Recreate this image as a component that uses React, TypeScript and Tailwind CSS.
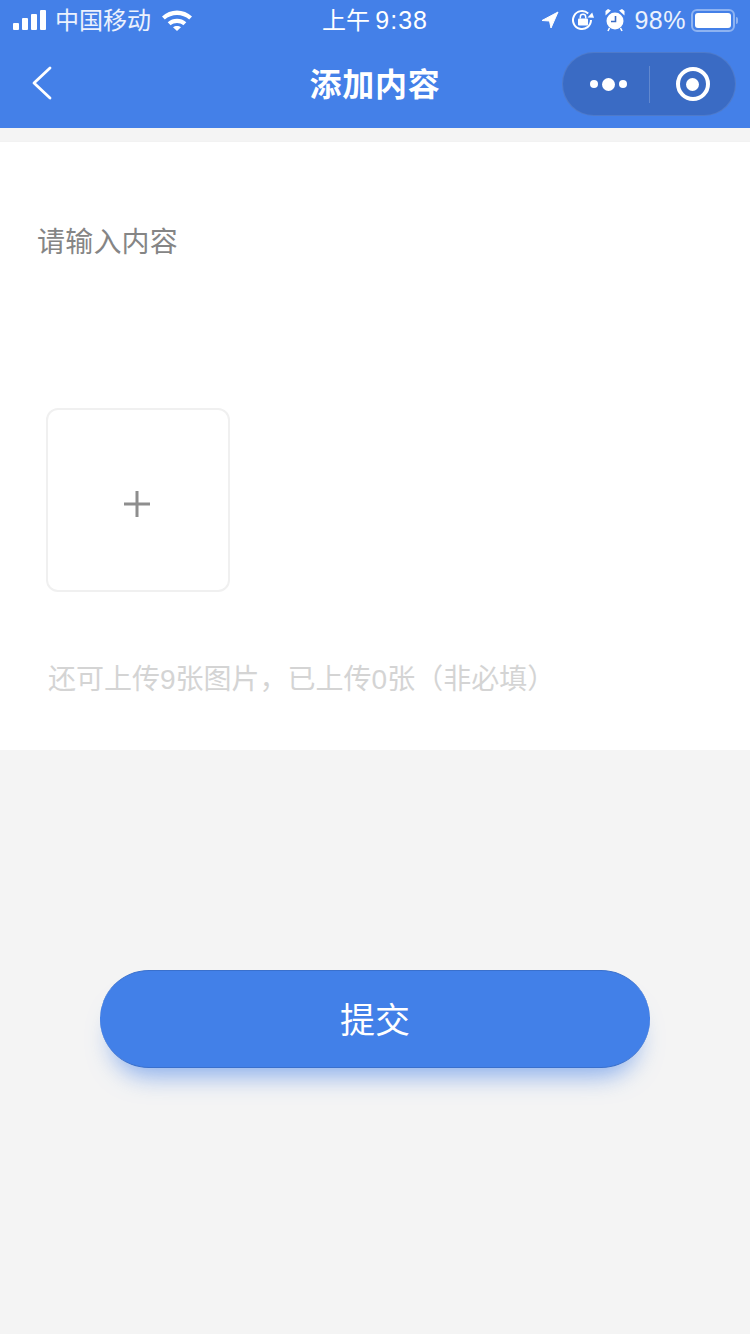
const FONT = "font-['Noto_Sans_CJK_SC','Liberation_Sans',sans-serif]";
const ROMAN = "font-['Liberation_Sans','Noto_Sans_CJK_SC',sans-serif]";

function StatusBar() {
  return (
    <div className="h-10 flex items-center justify-between pl-[13px] pr-[12px] text-white">
      <div className="flex items-center">
        <div className="flex items-end gap-[3px] h-[20px]">
          <span className="w-[6px] h-[7px] rounded-[1px] bg-white" />
          <span className="w-[6px] h-[12px] rounded-[1px] bg-white" />
          <span className="w-[6px] h-[16px] rounded-[1px] bg-white" />
          <span className="w-[6px] h-[20px] rounded-[1px] bg-white" />
        </div>
        <span className={`ml-[9px] text-[24px] leading-[30px] text-white/90 -mt-[2px] ${FONT}`}>中国移动</span>
        <svg className="ml-[11px]" width="30" height="22" viewBox="0 0 30 22" fill="#fff">
          <path d="M0 7.500C8-.5 22-.5 30 7.500l-2.800 3C20.500 4.500 9.500 4.500 2.800 10.500z" />
          <path d="M5.700 13.200c5.300-4.600 13.300-4.600 18.600 0l-2.900 3c-3.700-3-9.100-3-12.800 0z" />
          <path d="M11 18.300c2.300-1.800 5.700-1.800 8 0L15 22z" />
        </svg>
      </div>
      <div className={`absolute left-0 right-0 text-center text-[24px] leading-[30px] pointer-events-none -mt-[2px] ${FONT}`}>
        上午 <span className={`tracking-[1px] text-[25px] ${ROMAN}`}>9:38</span>
      </div>
      <div className="flex items-center">
        <svg width="18" height="18" viewBox="0 0 18 18" fill="#fff" stroke="#fff" strokeLinejoin="round">
          <path d="M17 1 1 9.500l7.500.5L10 17z" />
        </svg>
        <svg className="ml-[13px]" width="22" height="22" viewBox="0 0 22 22" fill="none" stroke="#fff">
          <path d="M19 11a9 9 0 1 1-2.800-6.500" strokeWidth="2" />
          <path d="m15.500 8.500 6.500.3-1.800-5.300z" fill="#fff" stroke="none" />
          <rect x="6" y="9.500" width="10" height="7" rx="1" fill="#fff" stroke="none" />
          <path d="M8.300 9.500V8a2.700 2.700 0 0 1 5.400 0v1.500" strokeWidth="1.500" />
        </svg>
        <svg className="ml-[11px]" width="20" height="24" viewBox="0 0 20 24" fill="none">
          <circle cx="10" cy="13" r="8.500" fill="#fff" />
          <path d="M10.500 8v5.500H6" stroke="#3a6bc4" strokeWidth="1.600" />
          <path d="M.5 7.500 6 2.500 3 1 .5 3zM19.500 7.500 14 2.500 17 1l2.500 2z" fill="#fff" />
          <path d="m4.500 20-1.500 3M15.500 20l1.500 3" stroke="#fff" strokeWidth="1.600" />
        </svg>
        <span className={`ml-[9px] text-[25px] tracking-[0.5px] leading-[30px] text-white/90 ${ROMAN}`}>98%</span>
        <div className="ml-[5px] flex items-center">
          <div className="w-[44px] h-[23px] rounded-[6px] border-2 border-white/40 p-[2px]">
            <div className="w-full h-full rounded-[3px] bg-white" />
          </div>
          <span className="ml-[1px] w-[2px] h-[7px] rounded-r-sm bg-white/40" />
        </div>
      </div>
    </div>
  );
}

function NavBar() {
  return (
    <div className="relative h-[88px] flex items-center justify-between pl-[32px] pr-[14px]">
      <svg width="20" height="34" viewBox="0 0 20 34" fill="none" stroke="#fff" strokeWidth="2.800" strokeLinecap="round" strokeLinejoin="round" className="-mt-[2px]">
        <path d="M18 2 2 17l16 15" />
      </svg>
      <div className={`absolute left-0 right-0 -mt-[4px] text-center text-[32px] tracking-[0.8px] leading-[40px] font-semibold text-white ${FONT}`}>
        添加内容
      </div>
      <div className="w-[174px] h-[64px] rounded-full bg-[#3a6bc4] border border-white/10 flex items-center">
        <div className="w-[86px] flex items-center justify-center gap-[4px] pl-[4px]">
          <span className="w-[8px] h-[8px] rounded-full bg-white" />
          <span className="w-[13px] h-[13px] rounded-full bg-white" />
          <span className="w-[8px] h-[8px] rounded-full bg-white" />
        </div>
        <span className="w-px h-[37px] bg-white/20" />
        <div className="flex-1 flex items-center justify-center">
          <div className="w-[34px] h-[34px] rounded-full border-[4px] border-white flex items-center justify-center">
            <span className="w-[13px] h-[13px] rounded-full bg-white" />
          </div>
        </div>
      </div>
    </div>
  );
}

export default function App() {
  return (
    <div className={`relative min-h-[1334px] bg-[#f4f4f4] ${FONT}`}>
      <div className="bg-[#4480e8]">
        <StatusBar />
        <NavBar />
      </div>

      <div className="mt-[13px] h-[609px] bg-white border-t border-[#f2f2f2] flex flex-col">
        <div className="pl-[37px] pt-[78px] text-[28px] tracking-[0.2px] leading-[40px] text-[#858585]">请输入内容</div>
        <div className="ml-[46px] mt-[148px] w-[184px] h-[184px] rounded-[12px] border-2 border-[#f0f0f0] flex items-center justify-center">
          <svg className="mt-[8px] -ml-[2px]" width="26" height="26" viewBox="0 0 26 26" stroke="#8e8e8e" strokeWidth="3">
            <path d="M0 13h26M13 0v26" />
          </svg>
        </div>
        <div className="pl-[48px] mt-[65px] text-[28px] leading-[40px] text-[#d4d4d4]">
          还可上传<span className={ROMAN}>9</span>张图片，已上传<span className={ROMAN}>0</span>张（非必填）
        </div>
      </div>

      <div className="mt-[220px] flex justify-center">
        <button className="w-[550px] h-[98px] pb-[2px] rounded-full bg-[#4280e8] border-y border-[#3a70cc] text-white text-[35px] shadow-[0_20px_24px_-12px_rgba(68,128,232,0.6)]">
          提交
        </button>
      </div>
    </div>
  );
}
